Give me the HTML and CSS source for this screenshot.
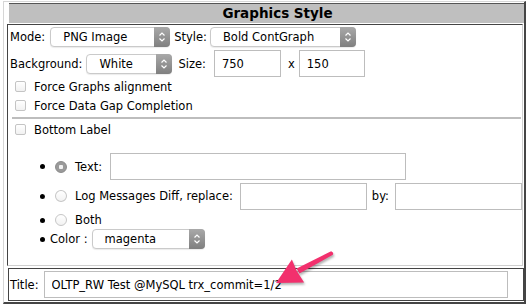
FILE: index.html
```html
<!DOCTYPE html>
<html lang="en">
<head>
    <meta charset="UTF-8">
    <title>Graphics Style</title>
    <link rel="stylesheet" href="styles.css">
</head>
<body>
    <div class="panel">
        <div class="panel-head">Graphics Style</div>

        <div class="panel-cell main-cell">
            <div class="row row-top">
                <span class="lbl">Mode:</span>
                <div class="select w-mode"><span>PNG Image</span><i class="sel-btn"><svg width="8" height="12" viewBox="0 0 8 12"><path d="M1.5 4.5 L4 2 L6.5 4.5 M1.5 7.5 L4 10 L6.5 7.5"/></svg></i></div>
                <span class="lbl">Style:</span>
                <div class="select w-style"><span>Bold ContGraph</span><i class="sel-btn"><svg width="8" height="12" viewBox="0 0 8 12"><path d="M1.5 4.5 L4 2 L6.5 4.5 M1.5 7.5 L4 10 L6.5 7.5"/></svg></i></div>
            </div>
            <div class="row row-size">
                <span class="lbl">Background:</span>
                <div class="select w-bg"><span>White</span><i class="sel-btn"><svg width="8" height="12" viewBox="0 0 8 12"><path d="M1.5 4.5 L4 2 L6.5 4.5 M1.5 7.5 L4 10 L6.5 7.5"/></svg></i></div>
                <span class="lbl">Size:</span>
                <input class="txt w-w" type="text" value="750">
                <span class="lbl times">x</span>
                <input class="txt w-h" type="text" value="150">
            </div>

            <div class="check-row"><span class="checkbox"></span>Force Graphs alignment</div>
            <div class="check-row"><span class="checkbox"></span>Force Data Gap Completion</div>
            <hr class="sep">
            <div class="check-row"><span class="checkbox"></span>Bottom Label</div>

            <ul class="label-opts">
                <li class="li-text"><span class="radio on"></span>Text:<input class="txt w-text" type="text"></li>
                <li class="li-log"><span class="radio"></span>Log Messages Diff, replace:<input class="txt w-rep" type="text"><span class="by">by:</span><input class="txt w-by" type="text"></li>
                <li class="li-both"><span class="radio"></span>Both</li>
                <li class="li-color">Color :<div class="select w-color"><span>magenta</span><i class="sel-btn"><svg width="8" height="12" viewBox="0 0 8 12"><path d="M1.5 4.5 L4 2 L6.5 4.5 M1.5 7.5 L4 10 L6.5 7.5"/></svg></i></div></li>
            </ul>
        </div>

        <div class="panel-cell title-cell">
            <span class="lbl">Title:</span>
            <input class="txt w-title" type="text" value="OLTP_RW Test @MySQL trx_commit=1/2">
        </div>
    </div>

    <!-- annotation arrow -->
    <svg class="arrow" width="70" height="42" viewBox="0 0 70 42">
        <path d="M29.4 25.6 L62.9 6.8 Q64 4.5 61.1 3.2 L26.6 20.4 Z"/>
        <path d="M6 35 L21.9 11.5 L26.5 22.5 L34.1 34.5 Z"/>
    </svg>
</body>
</html>
```

FILE: styles.css
```css
body {
    margin: 0;
    font-family: 'DejaVu Sans', sans-serif;
    font-size: 11.5px;
    color: #000;
    background-color: #fff;
}
.panel {
    box-sizing: border-box;
    width: 523px;
    margin: 1px 0 0 3px;
    padding: 1px 0 1px 3px;
    border-top: 1px solid #d6d6d6;
    border-left: 1px solid #d6d6d6;
    border-right: 2px solid #454545;
    border-bottom: 2px solid #454545;
    position: relative;
}
.panel-head {
    height: 19px;
    margin: 0 0 1px 2px;
    border-top: 1px solid #555;
    background-color: #bfbfbf;
    font-weight: bold;
    font-size: 13.5px;
    line-height: 19px;
    text-align: center;
    padding-left: 22px;
}
.panel-cell {
    border-top: 1px solid #444;
    border-left: 1px solid #444;
    border-right: 1px solid #cfcfcf;
    border-bottom: 1px solid #cfcfcf;
}
.main-cell {
    margin-right: 1px;
    padding-top: 2px;
    height: 238px;
}
.row {
    display: flex;
    align-items: center;
    padding-left: 2px;
}
.row-top {
    height: 20px;
}
.row-size {
    height: 27px;
    margin-top: 3px;
}
.lbl {
    white-space: nowrap;
}

/* selects (mac look) */
.select {
    box-sizing: border-box;
    display: flex;
    align-items: stretch;
    height: 20px;
    border: 1px solid #cacaca;
    border-radius: 4px;
    background-color: #fff;
    box-shadow: 0 1px 1px rgba(0, 0, 0, 0.08);
}
.select span {
    flex: 1;
    padding-left: 12px;
    line-height: 18px;
    white-space: nowrap;
    overflow: hidden;
}
.sel-btn {
    width: 16px;
    margin: -1px -1px -1px 0;
    border-radius: 0 4px 4px 0;
    background: linear-gradient(#a9a9a9, #7f7f7f);
    display: flex;
    align-items: center;
    justify-content: center;
}
.sel-btn svg path {
    fill: none;
    stroke: #fff;
    stroke-width: 1.2;
}
.w-mode { width: 120px; margin: 0 4px 0 5px; }
.w-style { width: 146px; margin-left: 3px; }
.w-bg { width: 86px; margin: 0 6px 0 4px; }
.w-color { width: 113px; margin-left: 4px; }

/* text inputs */
.txt {
    box-sizing: border-box;
    height: 27px;
    border: 1px solid #bdbdbd;
    border-radius: 0;
    padding: 0 0 0 7px;
    margin: 0;
    font-family: 'DejaVu Sans', sans-serif;
    font-size: 11.5px;
    color: #000;
    background-color: #fff;
    outline: none;
}
.w-w { width: 67px; margin-left: 8px; }
.times { margin: 0 4px 0 7px; }
.w-h { width: 66px; }
.w-text { width: 296px; margin-left: 8px; }
.w-rep { width: 127px; margin-left: 7px; }
.by { margin: 0 6px 0 5px; }
.w-by { width: 127px; }
.w-title { width: 464px; margin-left: 5px; }

/* checkboxes */
.check-row {
    display: flex;
    align-items: center;
    height: 19px;
    padding-left: 7px;
}
.check-row:first-of-type {
    margin-top: 1px;
}
.checkbox {
    box-sizing: border-box;
    width: 11px;
    height: 11px;
    margin-right: 8px;
    border: 1px solid #c4c4c4;
    border-radius: 2px;
    background: linear-gradient(#fff, #f1f1f1);
}
.sep {
    height: 2px;
    margin: 2px 1px 1px 4px;
    border: none;
    background-color: #bdbdbd;
}

/* bottom label options */
.label-opts {
    margin: 13px 0 0;
    padding-left: 42px;
    list-style: none;
}
.label-opts li {
    display: flex;
    align-items: center;
    white-space: nowrap;
}
.label-opts li::before {
    content: "";
    width: 5px;
    height: 5px;
    margin: 0 5px 0 -10px;
    border-radius: 50%;
    background-color: #000;
}
.li-text { height: 29px; }
.li-log { height: 30px; }
.li-both { height: 18px; }
.li-color { height: 20px; }
.radio {
    box-sizing: border-box;
    width: 12px;
    height: 12px;
    margin: 0 8px 0 5px;
    border: 1px solid #c6c6c6;
    border-radius: 50%;
    background: linear-gradient(#fff, #f2f2f2);
}
.radio.on {
    border-color: #8a8a8a;
    background: radial-gradient(circle, #f2f2f2 0 2px, #9a9a9a 2.5px);
}

.title-cell {
    margin: 2px 0 0 1px;
    height: 31px;
    border: 1px solid #444;
    display: flex;
    align-items: center;
    padding-left: 1px;
}

.arrow {
    position: absolute;
    left: 270px;
    top: 248px;
    fill: #f2306d;
    filter: drop-shadow(1px 2px 1px rgba(0, 0, 0, 0.3));
}
```
